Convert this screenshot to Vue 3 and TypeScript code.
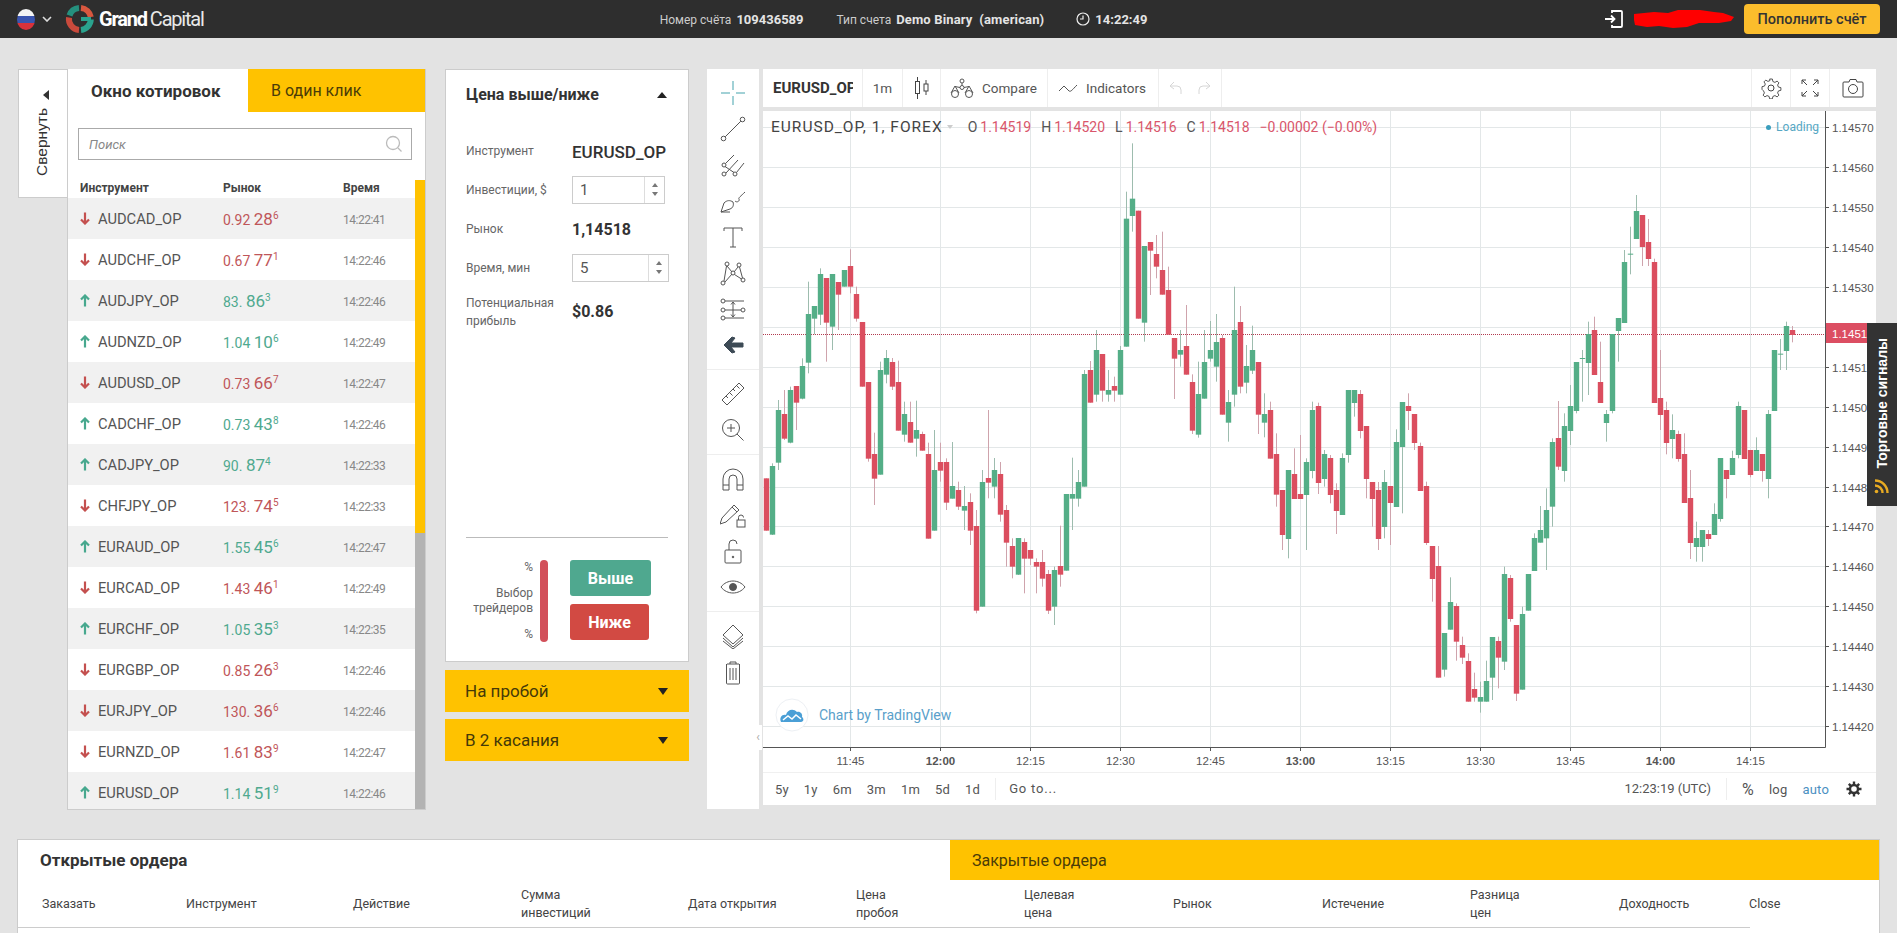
<template>
  <div class="page">
    <header class="topbar">
      <div class="flag"><span></span></div>
      <svg class="chevron" width="10" height="6" viewBox="0 0 10 6"><path d="M1 1l4 4 4-4" fill="none" stroke="#ddd" stroke-width="1.6" /></svg>
      <svg class="logo" width="32" height="32" viewBox="0 0 32 32" fill="none" stroke-width="6">
        <path d="M5.500 12.500A11 11 0 0 1 15 5" stroke="#25907e" />
        <path d="M17 5a11 11 0 0 1 9.800 9" stroke="#d8573f" />
        <path d="M26.800 16.500A11 11 0 0 1 17 27" stroke="#2aa38e" />
        <path d="M15 27A11 11 0 0 1 5 14.500" stroke="#c94a3c" />
        <path d="M17 16h10" stroke="#2aa38e" stroke-width="4" />
      </svg>
      <div class="brand"><b>Grand</b>Capital</div>
      <div class="account">
        <span class="acc-num">Номер счёта <b>109436589</b></span>
        <span class="acc-type">Тип счета <b>Demo Binary&nbsp; (american)</b></span>
        <span class="acc-time">
          <svg width="14" height="14" viewBox="0 0 14 14" fill="none" stroke="#eee" stroke-width="1.2"><circle cx="7" cy="7" r="6" /><path d="M7 3.500V7H4" /></svg>
          <b>14:22:49</b>
        </span>
      </div>
      <svg class="login" width="20" height="20" viewBox="0 0 20 20" fill="none" stroke="#fff" stroke-width="1.8"><path d="M8 4V2h9a1 1 0 0 1 1 1v14a1 1 0 0 1-1 1H8v-2" /><path d="M1 10h9M7 6.500l3.500 3.500L7 13.500" /></svg>
      <svg class="scribble" width="102" height="20" viewBox="0 0 102 20"><path d="M1 5l20-2 14 1 10-3 22 0 14 2 9 1 11 4-3 4-12 2-20 0-12 4-14 1-14-2-12 1-12-2-1-5z" fill="#f00" /></svg>
      <button class="topup" type="button">Пополнить счёт</button>
    </header>

    <main class="workspace">
      <aside class="collapse">
        <i class="tri-left"></i>
        <span>Свернуть</span>
      </aside>

      <section class="quotes">
        <div class="tabs">
          <div class="tab active">Окно котировок</div>
          <div class="tab">В один клик</div>
        </div>
        <div class="search">
          <input type="text" placeholder="Поиск" />
          <svg width="18" height="18" viewBox="0 0 18 18" fill="none" stroke="#bbb" stroke-width="1.3"><circle cx="8" cy="8" r="6.500" /><path d="M13 13l3.500 3.500" /></svg>
        </div>
        <div class="quote-head">
          <span>Инструмент</span><span>Рынок</span><span>Время</span>
        </div>
        <div class="quote-rows">
          <div v-for="q in quotes" :key="q.name" class="quote-row">
            <span class="q-name">
              <svg width="10" height="13" viewBox="0 0 10 13" fill="none" :stroke="q.up ? '#47a88e' : '#c4504f'" stroke-width="2.200">
                <path v-if="q.up" d="M5 12.500V2M1 5.500l4-4 4 4" />
                <path v-else d="M5 .500V11M1 7.500l4 4 4-4" />
              </svg>
              {{ q.name }}_OP
            </span>
            <span class="q-rate" :class="q.up ? 'up' : 'down'">{{ q.head }} <em>{{ q.big }}</em><sup>{{ q.tail }}</sup></span>
            <span class="q-time">{{ q.time }}</span>
          </div>
        </div>
        <div class="scroll"><div class="thumb"></div></div>
      </section>

      <section class="trade">
        <div class="trade-card">
          <div class="trade-title">Цена выше/ниже <i class="tri-up"></i></div>
          <div class="trade-form">
            <label>Инструмент</label>
            <strong class="symbol">EURUSD_OP</strong>
            <label>Инвестиции, $</label>
            <div class="spin short"><input type="text" value="1" /><div class="spin-btns"><i class="mini-up"></i><i class="mini-down"></i></div></div>
            <label>Рынок</label>
            <strong>1,14518</strong>
            <label>Время, мин</label>
            <div class="spin"><input type="text" value="5" /><div class="spin-btns"><i class="mini-up"></i><i class="mini-down"></i></div></div>
            <label class="two-line">Потенциальная прибыль</label>
            <strong class="profit">$0.86</strong>
          </div>
          <div class="traders">
            <div class="traders-text">
              <span>%</span>
              <span>Выбор<br />трейдеров</span>
              <span>%</span>
            </div>
            <div class="traders-bar"></div>
            <div class="trade-btns">
              <button class="btn-up" type="button">Выше</button>
              <button class="btn-down" type="button">Ниже</button>
            </div>
          </div>
        </div>
        <div class="accordion">На пробой <i class="tri-down"></i></div>
        <div class="accordion">В 2 касания <i class="tri-down"></i></div>
      </section>

      <nav class="tools">
        <div v-for="(group, g) in toolGroups" :key="g" class="tool-group">
          <div v-for="tool in group" :key="tool" class="tool">
            <svg width="26" height="26" viewBox="0 0 26 26" fill="none" :stroke="tool === 'cross' ? '#45a3ad' : '#555'" stroke-width="1">
              <g v-if="tool === 'cross'"><path d="M13 1v9M13 16v9M1 13h9M16 13h9" /></g>
              <g v-else-if="tool === 'line'"><circle cx="3.500" cy="22.500" r="2.300" /><circle cx="22.500" cy="3.500" r="2.300" /><path d="M5.200 20.800L20.800 5.200" /></g>
              <g v-else-if="tool === 'fork'"><circle cx="4" cy="13" r="2" /><circle cx="4" cy="22" r="2" /><circle cx="15" cy="22" r="2" /><path d="M5.500 11.500L14 3M6 21l12-13M16.500 20.500L24 11M5 14.500l9 6" /></g>
              <g v-else-if="tool === 'brush'"><path d="M1 24l3-9c3-3 6-3 9-1 1 3 0 6-3 7z M1 24h9" /><path d="M15 13c2 2 5 0 4-2-1-1 2-3 6-7" /></g>
              <g v-else-if="tool === 'text'"><path d="M4 4h18M4 4v3M22 4v3M13 4v19M10 23h6" /></g>
              <g v-else-if="tool === 'pattern'"><circle cx="7" cy="4" r="2" /><circle cx="19" cy="5" r="2" /><circle cx="13" cy="13" r="2" /><circle cx="3" cy="23" r="2" /><circle cx="23" cy="20" r="2" /><path d="M7 6l5 6M18 7l-4 5M6.500 6L4 21M19.500 7l3 11M5 22l7-8M14.500 14.500l7 4.500" /></g>
              <g v-else-if="tool === 'fib'"><circle cx="3" cy="5" r="2" /><circle cx="3" cy="14" r="2" /><circle cx="3" cy="22" r="2" /><circle cx="23" cy="14" r="2" /><path d="M5 5h19M5 14h16M5 22h19M13 6v15M11 8.500l2-2.500 2 2.500M11 18.500l2 2.500 2-2.500" /></g>
              <g v-else-if="tool === 'back'"><path d="M12 5l-8 8 8 8 3-1-4-5h12v-4H11l4-5z" fill="#3d4a55" stroke="#3d4a55" /></g>
              <g v-else-if="tool === 'ruler'"><path d="M2 19L19 2l5 5L7 24z M6 15l2 2M9.500 11.500l3 3M13 8l2 2M16.500 4.500l3 3" /></g>
              <g v-else-if="tool === 'zoom'"><circle cx="11" cy="11" r="8.500" /><path d="M17 17l6.500 6.500M7 11h8M11 7v8" /></g>
              <g v-else-if="tool === 'magnet'"><path d="M3 24V13a10 10 0 0 1 20 0v11h-6V13a4 4 0 0 0-8 0v11zM3 19h6M17 19h6" /></g>
              <g v-else-if="tool === 'pencil'"><path d="M2 16L14 3l5 5L6 20l-6 2z M12 5l5 5" /><rect x="17" y="18" width="8" height="7" /><path d="M18.500 18v-2.500a2.500 2.500 0 0 1 5 0" /></g>
              <g v-else-if="tool === 'lock'"><rect x="5" y="12" width="16" height="13" rx="1" /><path d="M9 12V6a4 4 0 0 1 8 0" /><circle cx="13" cy="19" r=".8" fill="#555" /></g>
              <g v-else-if="tool === 'eye'"><path d="M1 13c6-8 18-8 24 0-6 8-18 8-24 0z" /><circle cx="13" cy="13" r="3.500" fill="#555" /></g>
              <g v-else-if="tool === 'layers'"><path d="M13 2l10 10-10 9-10-9zM3 15l10 9 10-9M3 18l10 8 10-8" /></g>
              <g v-else-if="tool === 'trash'"><path d="M7 5h12M10 5V3h6v2M6.500 5v19a1 1 0 0 0 1 1h11a1 1 0 0 0 1-1V5M10 9v12M13 9v12M16 9v12" /></g>
            </svg>
          </div>
        </div>
      </nav>

      <section class="chart">
        <div class="chart-top">
          <div class="cell symbol-cell"><span>EURUSD_OP</span></div>
          <div class="cell">1m</div>
          <div class="cell">
            <svg width="16" height="24" viewBox="0 0 16 24" fill="none" stroke="#444" stroke-width="1"><rect x="1.500" y="5.500" width="4" height="12" /><path d="M3.500 1v4M3.500 18v5M12 4v4M12 15v4" /><rect x="10" y="8" width="4" height="7" /></svg>
          </div>
          <div class="cell">
            <svg width="24" height="22" viewBox="0 0 24 22" fill="none" stroke="#555" stroke-width="1"><circle cx="12" cy="4" r="2" /><circle cx="12" cy="10.500" r="2" /><path d="M12 6v2.500M1 16l4-7 4 7M15 16l4-7 4 7" /><path d="M10 10.500l-5-1M14 10.500l5-1" /><circle cx="5" cy="17" r="3.500" /><circle cx="19" cy="17" r="3.500" /></svg>
            Compare
          </div>
          <div class="cell">
            <svg width="20" height="12" viewBox="0 0 20 12" fill="none" stroke="#555" stroke-width="1"><path d="M1 9l5-5 5 5c2 1 3-1 8-6" /></svg>
            Indicators
          </div>
          <div class="cell undo">
            <svg width="14" height="14" viewBox="0 0 14 14" fill="none" stroke="#d6d6d6" stroke-width="1"><path d="M5 1L1 5l4 3M1 5h7a4 4 0 0 1 4 4v4" /></svg>
            <svg width="14" height="14" viewBox="0 0 14 14" fill="none" stroke="#d6d6d6" stroke-width="1"><path d="M9 1l4 4-4 3M13 5H6a4 4 0 0 0-4 4v4" /></svg>
          </div>
          <div class="top-spacer"></div>
          <div class="cell icon-cell">
            <svg width="22" height="22" viewBox="0 0 22 22" fill="none" stroke="#444" stroke-width="1"><circle cx="11" cy="11" r="3" /><path d="M9.500 1h3l.6 2.800 2.300 1 2.400-1.500 2 2-1.500 2.400 1 2.300 2.700.6v3l-2.700.6-1 2.300 1.500 2.400-2 2-2.400-1.500-2.300 1-.6 2.700h-3l-.6-2.700-2.300-1-2.400 1.500-2-2 1.500-2.400-1-2.300L1 12.500v-3l2.700-.6 1-2.300-1.500-2.400 2-2 2.400 1.500 2.300-1z" transform="translate(1.100 1.100) scale(.9)" /></svg>
          </div>
          <div class="cell icon-cell">
            <svg width="18" height="18" viewBox="0 0 18 18" fill="none" stroke="#444" stroke-width="1"><path d="M1 5V1h4M13 1h4v4M1 13v4h4M13 17h4v-4M1 1l5 5M17 1l-5 5M1 17l5-5M17 17l-5-5" /></svg>
          </div>
          <div class="cell icon-cell last">
            <svg width="22" height="20" viewBox="0 0 22 20" fill="none" stroke="#444" stroke-width="1"><path d="M2 4h5l1-2.500h6L15 4h5a1 1 0 0 1 1 1v13a1 1 0 0 1-1 1H2a1 1 0 0 1-1-1V5a1 1 0 0 1 1-1z" /><circle cx="11" cy="11" r="4.500" /></svg>
          </div>
        </div>

        <div class="pane">
          <svg class="plot" width="1113" height="661" viewBox="0 0 1113 661">
            <g stroke="#e3e7e8" stroke-width="1">
              <line v-for="t in timeTicks" :key="t.label" :x1="t.x" :x2="t.x" y1="0" y2="636" />
              <line v-for="p in priceTicks" :key="p.label" x1="0" x2="1063" :y1="p.y" :y2="p.y" />
            </g>
            <line x1="0" x2="1063" y1="223.500" y2="223.500" stroke="#b23a4e" stroke-dasharray="1 1" />
            <g v-for="c in candles" :key="c.x">
              <line :x1="c.x" :x2="c.x" :y1="c.high" :y2="c.low" :stroke="c.up ? '#9dbcae' : '#cfa3ac'" />
              <rect :x="c.x - 2.700" :y="c.top" width="5.400" :height="c.height" :fill="c.up ? '#54ae87' : '#db4e5f'" />
            </g>
            <path d="M0 636.500H1062.500V0" fill="none" stroke="#555" />
            <g stroke="#555">
              <line v-for="t in timeTicks" :key="t.label" :x1="t.x" :x2="t.x" y1="636" y2="640" />
              <line v-for="p in priceTicks" :key="p.label" x1="1063" x2="1066" :y1="p.y" :y2="p.y" />
            </g>
            <text v-for="t in timeTicks" :key="t.label" :x="t.x" y="654" class="axis-text" :class="{ bold: t.bold }" text-anchor="middle">{{ t.label }}</text>
            <text v-for="p in priceTicks" :key="p.label" x="1069" :y="p.y + 4" class="axis-text">{{ p.label }}</text>
            <rect x="1063" y="212" width="50" height="20" fill="#dc4e62" />
            <text x="1069" y="226.500" class="axis-text last-price">1.14518</text>
          </svg>

          <div class="legend">
            <span class="legend-name">EURUSD_OP, 1, FOREX</span>
            <i class="legend-caret"></i>
            <span class="ohlc"><u>O</u>1.14519</span>
            <span class="ohlc"><u>H</u>1.14520</span>
            <span class="ohlc"><u>L</u>1.14516</span>
            <span class="ohlc"><u>C</u>1.14518</span>
            <span class="ohlc">−0.00002 (−0.00%)</span>
          </div>
          <div class="loading"><i></i>Loading</div>
          <div class="watermark">
            <svg width="34" height="34" viewBox="0 0 34 34">
              <circle cx="17" cy="17" r="16" fill="#fff" stroke="#edf0f4" />
              <path d="M6 24c-2-4 1-8 5-7 1-5 7-7 11-3 3-1 6 2 5 5 2 1 2 5-1 5z" fill="#4a9fd6" />
              <path d="M8 22l5-4 4 3 4-4 5 4" fill="none" stroke="#fff" stroke-width="1.500" />
            </svg>
            <span>Chart by TradingView</span>
          </div>
          <div class="side-handle">‹</div>
        </div>

        <div class="chart-bottom">
          <span v-for="r in ranges" :key="r">{{ r }}</span>
          <span class="goto">Go to...</span>
          <div class="top-spacer"></div>
          <span class="utc">12:23:19 (UTC)</span>
          <span class="pct">%</span>
          <span>log</span>
          <span class="auto">auto</span>
          <svg width="16" height="16" viewBox="0 0 16 16" fill="none" stroke="#333" stroke-width="2.400"><circle cx="8" cy="8" r="4" /><path d="M8 .5v3M8 12.500v3M.5 8h3M12.500 8h3M2.800 2.800l2 2M11.200 11.200l2 2M13.200 2.800l-2 2M4.800 11.200l-2 2" /></svg>
        </div>
      </section>

      <aside class="signals">
        <span>Торговые сигналы</span>
        <svg width="18" height="18" viewBox="0 0 18 18" fill="none" stroke="#e8ab22" stroke-width="2.400"><circle cx="3.500" cy="14.500" r="1.800" fill="#e8ab22" stroke="none" /><path d="M2 8.500a7.500 7.500 0 0 1 7.500 7.500M2 3.500a12.500 12.500 0 0 1 12.500 12.500" /></svg>
      </aside>
    </main>

    <section class="orders">
      <div class="order-tabs">
        <div class="order-tab active">Открытые ордера</div>
        <div class="order-tab">Закрытые ордера</div>
      </div>
      <div class="order-head">
        <span v-for="col in orderColumns" :key="col" v-html="col"></span>
      </div>
    </section>
  </div>
</template>

<script setup lang="ts">
interface Quote {
  name: string
  head: string
  big: string
  tail: string
  up: boolean
  time: string
}

const quote = (name: string, head: string, big: string, tail: string, up: boolean, time: string): Quote => ({
  name,
  head,
  big,
  tail,
  up,
  time: '14:22:' + time,
})

const quotes: Quote[] = [
  quote('AUDCAD', '0.92', '28', '6', false, '41'),
  quote('AUDCHF', '0.67', '77', '1', false, '46'),
  quote('AUDJPY', '83.', '86', '3', true, '46'),
  quote('AUDNZD', '1.04', '10', '6', true, '49'),
  quote('AUDUSD', '0.73', '66', '7', false, '47'),
  quote('CADCHF', '0.73', '43', '8', true, '46'),
  quote('CADJPY', '90.', '87', '4', true, '33'),
  quote('CHFJPY', '123.', '74', '5', false, '33'),
  quote('EURAUD', '1.55', '45', '6', true, '47'),
  quote('EURCAD', '1.43', '46', '1', false, '49'),
  quote('EURCHF', '1.05', '35', '3', true, '35'),
  quote('EURGBP', '0.85', '26', '3', false, '46'),
  quote('EURJPY', '130.', '36', '6', false, '46'),
  quote('EURNZD', '1.61', '83', '9', false, '47'),
  quote('EURUSD', '1.14', '51', '9', true, '46'),
]

const toolGroups = [
  ['cross', 'line', 'fork', 'brush', 'text', 'pattern', 'fib', 'back'],
  ['ruler', 'zoom'],
  ['magnet', 'pencil', 'lock', 'eye'],
  ['layers', 'trash'],
]

const ranges = ['5y', '1y', '6m', '3m', '1m', '5d', '1d']

const orderColumns = [
  'Заказать',
  'Инструмент',
  'Действие',
  'Сумма<br>инвестиций',
  'Дата открытия',
  'Цена<br>пробоя',
  'Целевая<br>цена',
  'Рынок',
  'Истечение',
  'Разница<br>цен',
  'Доходность',
  'Close',
]

// chart pane starts at 763,111 on the page
const PANE_X = 763
const PANE_Y = 111
const BAR_STEP = 6
const firstTick = 850.5 - PANE_X

const timeLabels = ['11:45', '12:00', '12:15', '12:30', '12:45', '13:00', '13:15', '13:30', '13:45', '14:00', '14:15']
const timeTicks = timeLabels.map((label, i) => ({
  label,
  x: firstTick + i * 15 * BAR_STEP,
  bold: label.endsWith(':00'),
}))

const priceTicks = Array.from({ length: 16 }, (_, i) => ({
  label: (1.1457 - i * 0.0001).toFixed(5),
  y: Math.round(127.4 + i * 39.9 - PANE_Y) + 0.5,
}))

// bars: [up, wick top, body top, body bottom, wick bottom], y in thirds of a px from `dy`
type Bar = [number, number, number, number, number]

const barBlocks: { dy: number; first: number; bars: Bar[] }[] = [
  {
    dy: 135,
    first: -14,
    bars: [
      [0, 1030, 1030, 1187, 1187], [1, 985, 993, 1199, 1200], [1, 795, 825, 983, 1005], [0, 765, 837, 911, 915],
      [1, 755, 765, 923, 925], [0, 753, 753, 803, 885], [1, 670, 693, 791, 793], [1, 440, 537, 683, 715],
      [1, 513, 513, 551, 598], [1, 400, 417, 539, 570], [0, 429, 429, 563, 680], [1, 417, 417, 575, 645],
      [0, 441, 441, 479, 585], [1, 405, 405, 455, 455], [0, 343, 393, 455, 475], [0, 455, 477, 551, 560],
      [0, 561, 561, 755, 755], [0, 741, 741, 971, 980], [0, 893, 957, 1031, 1110], [1, 680, 705, 1019, 1019],
      [1, 645, 669, 719, 745], [0, 669, 681, 755, 765], [0, 677, 741, 887, 887], [1, 800, 837, 899, 920],
      [0, 800, 861, 923, 923], [1, 797, 885, 911, 965], [0, 890, 897, 947, 947], [0, 923, 957, 1211, 1211],
      [1, 885, 1005, 1187, 1187], [0, 923, 981, 1007, 1040], [0, 970, 981, 1103, 1125], [1, 921, 1053, 1091, 1091],
      [0, 1040, 1065, 1115, 1125], [1, 1053, 1113, 1127, 1185], [0, 1075, 1101, 1187, 1230], [0, 1125, 1173, 1427, 1435],
      [1, 1005, 1041, 1415, 1415], [0, 825, 1029, 1043, 1090], [1, 969, 1005, 1055, 1090], [0, 981, 1017, 1139, 1160],
      [0, 1110, 1125, 1223, 1295], [0, 1210, 1233, 1295, 1330], [1, 1209, 1209, 1319, 1320], [0, 1210, 1221, 1271, 1375],
      [0, 1245, 1245, 1271, 1290], [0, 1270, 1281, 1295, 1375], [0, 1245, 1281, 1331, 1355], [0, 1305, 1317, 1427, 1437],
      [1, 1295, 1305, 1415, 1470], [0, 1172, 1293, 1319, 1355], [1, 1077, 1077, 1307, 1307], [1, 968, 1077, 1091, 1185],
      [1, 1005, 1041, 1091, 1115], [1, 705, 717, 1055, 1055], [0, 678, 705, 803, 803], [1, 585, 645, 779, 800],
      [0, 657, 657, 767, 800], [1, 705, 765, 779, 800], [0, 725, 753, 767, 800], [1, 633, 645, 779, 779],
      [1, 170, 251, 635, 635], [1, 25, 191, 243, 290], [0, 227, 227, 551, 551], [1, 333, 333, 563, 620],
      [0, 321, 321, 347, 480], [0, 300, 357, 395, 430], [0, 290, 405, 479, 479], [0, 395, 465, 599, 599],
      [0, 609, 609, 671, 792], [1, 585, 645, 659, 695], [0, 510, 633, 719, 719], [0, 718, 741, 887, 897],
      [1, 680, 777, 899, 908], [1, 585, 681, 791, 791], [1, 558, 645, 671, 680], [1, 537, 621, 695, 740],
      [0, 600, 609, 839, 839], [1, 765, 801, 863, 920], [1, 455, 585, 779, 815], [0, 513, 561, 755, 775],
      [1, 630, 693, 743, 775], [1, 572, 645, 707, 717], [0, 681, 681, 839, 897], [1, 775, 837, 863, 907],
      [0, 800, 825, 971, 971], [0, 895, 957, 1079, 1115],
    ],
  },
  {
    dy: 220,
    first: 72,
    bars: [
      [0, 810, 810, 945, 990], [1, 750, 750, 957, 1015], [0, 685, 762, 837, 837], [0, 645, 822, 837, 837],
      [1, 715, 726, 825, 990], [1, 545, 570, 753, 775], [0, 548, 558, 789, 822], [1, 690, 702, 777, 800],
      [0, 705, 714, 825, 850], [0, 790, 810, 873, 942], [1, 700, 714, 885, 885], [1, 510, 510, 705, 728],
      [1, 510, 510, 549, 590], [0, 510, 522, 633, 655], [0, 618, 618, 777, 835], [0, 786, 786, 837, 920],
      [0, 786, 810, 957, 990], [1, 750, 786, 921, 955], [0, 798, 798, 849, 975], [1, 628, 666, 861, 861],
      [1, 546, 546, 681, 880], [0, 520, 558, 573, 630], [0, 582, 582, 669, 690], [0, 668, 678, 813, 813],
      [0, 785, 798, 969, 975], [0, 978, 978, 1077, 1145], [0, 978, 1038, 1373, 1373], [1, 1239, 1239, 1349, 1370],
      [1, 1072, 1146, 1229, 1229], [0, 1150, 1158, 1265, 1322], [0, 1250, 1275, 1313, 1332], [0, 1300, 1323, 1445, 1445],
      [0, 1358, 1407, 1433, 1445], [1, 1385, 1431, 1445, 1478], [1, 1322, 1383, 1445, 1445], [1, 1251, 1251, 1373, 1440],
      [0, 1250, 1263, 1313, 1405], [1, 1040, 1062, 1325, 1350], [0, 1065, 1074, 1197, 1205], [0, 1215, 1215, 1421, 1443],
      [1, 1160, 1182, 1409, 1409], [1, 1062, 1062, 1172, 1172], [1, 940, 954, 1053, 1053],
    ],
  },
  {
    dy: 180,
    first: 115,
    bars: [
      [1, 978, 1050, 1088, 1088], [1, 925, 990, 1075, 1170], [1, 775, 786, 980, 1040], [0, 663, 774, 860, 870],
      [1, 700, 738, 873, 905], [1, 615, 678, 753, 795], [1, 546, 546, 693, 700], [1, 510, 534, 537, 665],
      [1, 425, 462, 549, 645], [0, 410, 450, 585, 585], [0, 485, 606, 669, 669], [1, 690, 702, 729, 785],
      [1, 462, 462, 693, 700], [1, 414, 414, 453, 545], [1, 210, 246, 429, 429], [1, 140, 221, 224, 283],
      [1, 45, 93, 177, 177], [0, 105, 105, 201, 258], [0, 117, 186, 237, 258], [0, 236, 246, 669, 669],
      [0, 510, 654, 705, 750], [0, 665, 690, 789, 823], [1, 703, 750, 777, 835], [0, 752, 762, 837, 845],
      [0, 760, 822, 969, 969], [0, 870, 954, 1089, 1137], [1, 1025, 1074, 1101, 1145], [1, 1050, 1050, 1101, 1145],
      [0, 1050, 1062, 1077, 1098], [1, 970, 1002, 1065, 1065], [1, 834, 834, 1017, 1025], [0, 870, 870, 897, 955],
      [1, 812, 834, 885, 885], [1, 665, 678, 825, 835], [0, 690, 690, 837, 837], [0, 810, 810, 885, 892],
      [1, 772, 810, 873, 873], [0, 822, 822, 873, 905], [1, 690, 702, 897, 955], [1, 510, 510, 693, 693],
      [1, 477, 521, 524, 570], [1, 425, 438, 513, 570], [0, 438, 450, 465, 487],
    ],
  },
]

const candles = barBlocks.flatMap(({ dy, first, bars }) =>
  bars.map(([up, high, top, bottom, low], i) => {
    const toY = (z: number) => dy + z / 3 - PANE_Y
    return {
      x: Math.round(firstTick - 1 + (first + i) * BAR_STEP) + 0.5,
      up: up === 1,
      high: toY(high),
      low: toY(low),
      top: toY(top),
      height: (bottom - top) / 3,
    }
  }),
)
</script>

<style scoped>
.page {
  position: relative;
  width: 1897px;
  height: 933px;
  overflow: hidden;
  background: #e3e3e3;
  font-family: Roboto, "Noto Sans", sans-serif;
  color: #333;
}

/* header */
.topbar {
  display: flex;
  align-items: center;
  height: 38px;
  padding: 0 17px;
  background: #2e2e2e;
  color: #ccc;
  font-size: 12px;
}

.flag {
  width: 18px;
  height: 21px;
  border-radius: 50%;
  overflow: hidden;
  background: linear-gradient(#f4f4f4 0 33%, #3a55b0 33% 66%, #d8323c 66%);
}

.chevron {
  margin-left: 7px;
}

.logo {
  margin-left: 12px;
}

.brand {
  margin-left: 3px;
  color: #e8e8e8;
  font-size: 20px;
  letter-spacing: -1.200px;
  white-space: nowrap;
}

.brand b {
  margin-right: 3px;
  color: #fff;
}

.account {
  display: flex;
  align-items: center;
  margin-left: 456px;
  white-space: nowrap;
}

.account b {
  margin-left: 2px;
  color: #e4e4e4;
  font-size: 13px;
  font-weight: 700;
}

.acc-type {
  margin-left: 33px;
}

.acc-type b {
  letter-spacing: .15px;
}

.acc-time {
  display: flex;
  align-items: center;
  gap: 3px;
  margin-left: 32px;
}

.login {
  margin-left: auto;
}

.scribble {
  margin-left: 9px;
}

.topup {
  width: 136px;
  height: 30px;
  margin-left: 9px;
  border: 0;
  border-radius: 4px;
  background: #fbbd2c;
  color: #333;
  font: 500 14.500px Roboto, sans-serif;
}

/* main row */
.workspace {
  position: relative;
  display: flex;
  align-items: flex-start;
  padding: 31px 0 0 18px;
}

.collapse {
  position: relative;
  width: 49px;
  height: 129px;
  box-sizing: border-box;
  background: #fff;
  border: 1px solid #ccc;
  border-right: 0;
}

.tri-left {
  position: absolute;
  top: 20px;
  left: 24px;
  border: 5px solid transparent;
  border-left-width: 0;
  border-right: 6px solid #333;
}

.collapse span {
  position: absolute;
  top: 38px;
  left: 14px;
  writing-mode: vertical-rl;
  transform: rotate(180deg);
  font: 15.500px "Liberation Sans", sans-serif;
}

.quotes {
  position: relative;
  width: 359px;
  height: 741px;
  box-sizing: border-box;
  display: flex;
  flex-direction: column;
  overflow: hidden;
  background: #fff;
  border: 1px solid #ccc;
  border-top: 0;
}

.tabs {
  display: flex;
  height: 43px;
  flex: none;
  font-size: 16px;
}

.tab {
  display: flex;
  align-items: center;
  flex: 1;
  padding-left: 23px;
  box-sizing: border-box;
  background: #ffc200;
  color: #4a3c08;
}

.tab.active {
  flex: none;
  width: 180px;
  background: #fff;
  color: #333;
  font-size: 17px;
  font-weight: 700;
}

.search {
  position: relative;
  flex: none;
  margin: 16px 13px 0 10px;
  height: 32px;
}

.search input {
  width: 100%;
  height: 100%;
  box-sizing: border-box;
  padding-left: 10px;
  border: 1px solid #aaa;
  outline: 0;
  font: italic 13px Roboto, sans-serif;
}

.search input::placeholder {
  color: #888;
}

.search svg {
  position: absolute;
  top: 7px;
  right: 9px;
}

.quote-head {
  display: grid;
  grid-template-columns: 143px 120px 1fr;
  flex: none;
  height: 38px;
  align-items: flex-end;
  padding: 0 0 3px 12px;
  box-sizing: border-box;
  font-size: 12px;
  font-weight: 700;
  color: #444;
}

.quote-row {
  display: grid;
  grid-template-columns: 143px 120px 1fr;
  align-items: center;
  height: 41px;
  margin-right: 10px;
  padding-left: 12px;
  box-sizing: border-box;
}

.quote-row:nth-child(odd) {
  background: #f1f1f1;
}

.q-name {
  display: flex;
  align-items: center;
  gap: 8px;
  font-size: 14.700px;
  color: #555;
}

.q-rate {
  font-size: 14px;
  white-space: nowrap;
}

.q-rate em {
  font-style: normal;
  font-size: 17px;
}

.q-rate sup {
  font-size: 10px;
  line-height: 0;
}

.q-rate.up {
  color: #4fa98f;
}

.q-rate.down {
  color: #bf5659;
}

.q-time {
  padding-top: 3px;
  font-size: 12px;
  letter-spacing: -.5px;
  color: #888;
}

.scroll {
  position: absolute;
  top: 111px;
  right: 0;
  bottom: 0;
  width: 10px;
  background: #b3b3b3;
}

.thumb {
  height: 353px;
  background: #ffc200;
}

/* trade card */
.trade {
  width: 244px;
  margin-left: 19px;
}

.trade-card {
  height: 593px;
  box-sizing: border-box;
  display: flex;
  flex-direction: column;
  padding: 0 20px;
  background: #fff;
  border: 1px solid #ccc;
}

.trade-title {
  display: flex;
  align-items: center;
  justify-content: space-between;
  flex: none;
  height: 61px;
  box-sizing: border-box;
  padding: 0 1px 12px 0;
  font-size: 16px;
  font-weight: 700;
}

.tri-up {
  border: 5px solid transparent;
  border-top: 0;
  border-bottom: 6px solid #222;
}

.tri-down {
  border: 5px solid transparent;
  border-bottom: 0;
  border-top: 7px solid #222;
}

.trade-form {
  display: grid;
  grid-template-columns: 106px 1fr;
  grid-auto-rows: 39px;
  align-items: center;
  flex: 1;
}

.trade-form label {
  font-size: 12px;
  color: #666;
}

.trade-form label.two-line {
  line-height: 18px;
  height: 36px;
  width: 96px;
  margin-top: 10px;
}

.trade-form strong {
  font-size: 16px;
  font-weight: 700;
  color: #333;
  padding-top: 2px;
}

.trade-form strong.symbol {
  font-size: 17px;
  font-weight: 500;
}

.trade-form strong.profit {
  padding-top: 10px;
}

.spin {
  display: flex;
  width: 97px;
  height: 28px;
  box-sizing: border-box;
  border: 1px solid #ccc;
}

.spin.short {
  width: 93px;
}

.spin input {
  width: 0;
  flex: 1;
  padding: 0 0 0 7px;
  border: 0;
  outline: 0;
  font: 15px Roboto, sans-serif;
  color: #555;
}

.spin-btns {
  display: flex;
  flex-direction: column;
  justify-content: space-around;
  align-items: center;
  width: 20px;
  padding: 4px 0;
  box-sizing: border-box;
  border-left: 1px solid #ddd;
}

.mini-up {
  border: 3px solid transparent;
  border-top: 0;
  border-bottom: 4px solid #777;
}

.mini-down {
  border: 3px solid transparent;
  border-bottom: 0;
  border-top: 4px solid #777;
}

.traders {
  display: flex;
  flex: none;
  height: 124px;
  box-sizing: border-box;
  padding-top: 22px;
  border-top: 1px solid #bbb;
}

.traders-text {
  display: flex;
  flex-direction: column;
  justify-content: space-between;
  width: 67px;
  height: 82px;
  text-align: right;
  font-size: 12px;
  line-height: 15px;
  color: #666;
}

.traders-bar {
  width: 8px;
  height: 82px;
  margin-left: 7px;
  border-radius: 4px;
  background: #d2505a;
}

.trade-btns {
  display: flex;
  flex-direction: column;
  align-items: flex-start;
  gap: 8px;
  margin-left: 22px;
}

.trade-btns button {
  width: 81px;
  height: 36px;
  border: 0;
  border-radius: 3px;
  color: #fff;
  font: 700 16px Roboto, sans-serif;
}

.trade-btns .btn-down {
  width: 79px;
}

.btn-up {
  background: #4fa88f;
}

.btn-down {
  background: #d24a43;
}

.accordion {
  display: flex;
  align-items: center;
  justify-content: space-between;
  height: 42px;
  margin-top: 8px;
  padding: 0 21px 0 20px;
  background: #ffc200;
  color: #453908;
  font-size: 17px;
}

.accordion + .accordion {
  margin-top: 7px;
}

/* drawing tools */
.tools {
  width: 52px;
  height: 740px;
  margin-left: 18px;
  flex: none;
  background: #fff;
}

.tool-group {
  padding: 6px 0;
  border-bottom: 1px solid #eee;
}

.tool-group:last-child {
  border: 0;
}

.tool {
  display: flex;
  align-items: center;
  justify-content: center;
  height: 36px;
}

/* chart */
.chart {
  width: 1113px;
  margin-left: 4px;
  flex: none;
}

.chart-top {
  display: flex;
  align-items: center;
  height: 38px;
  background: #fff;
  font-size: 13.500px;
  color: #555;
}

.cell {
  display: flex;
  align-items: center;
  gap: 8px;
  height: 100%;
  box-sizing: border-box;
  padding: 0 10px;
  border-right: 1px solid #eee;
  white-space: nowrap;
}

.symbol-cell {
  width: 100px;
  overflow: hidden;
  padding-right: 9px;
  font-size: 15px;
  font-weight: 700;
  color: #333;
}

.symbol-cell span {
  display: block;
  width: 80px;
  overflow: hidden;
}

.cell:nth-child(2) {
  width: 40px;
  justify-content: center;
  padding: 0;
}

.cell:nth-child(3) {
  width: 38px;
  justify-content: center;
  padding: 0;
}

.cell:nth-child(4) {
  width: 107px;
  padding-left: 9px;
}

.cell:nth-child(5) {
  width: 111px;
}

.undo {
  width: 63px;
  gap: 14px;
}

.top-spacer {
  flex: 1;
}

.icon-cell {
  width: 39px;
  justify-content: center;
  padding: 0;
  border-right: 0;
  border-left: 1px solid #eee;
}

.icon-cell.last {
  width: 47px;
}

.pane {
  position: relative;
  height: 661px;
  margin-top: 4px;
  background: #fff;
}

.plot {
  display: block;
}

.axis-text {
  font: 11.500px "Liberation Sans", sans-serif;
  fill: #555;
}

.axis-text.bold {
  font-weight: 700;
}

.axis-text.last-price {
  fill: #fff;
}

.legend {
  position: absolute;
  top: 6px;
  left: 8px;
  display: flex;
  align-items: center;
  font-size: 14px;
  line-height: 20px;
  white-space: nowrap;
  color: #d9566b;
}

.legend-name {
  color: #444;
  font-size: 15.500px;
  letter-spacing: 1px;
}

.legend-caret {
  margin: 0 15px 0 4px;
  border: 3px solid transparent;
  border-bottom: 0;
  border-top: 4px solid #ccc;
}

.ohlc {
  margin-right: 10px;
}

.ohlc u {
  margin-right: 3px;
  text-decoration: none;
  color: #555;
}

.loading {
  position: absolute;
  top: 9px;
  right: 57px;
  display: flex;
  align-items: center;
  gap: 5px;
  font-size: 12px;
  color: #55a7c4;
}

.loading i {
  width: 5px;
  height: 5px;
  border-radius: 50%;
  background: #3a9ebd;
}

.watermark {
  position: absolute;
  top: 587px;
  left: 12px;
  display: flex;
  align-items: center;
  gap: 10px;
  font-size: 14px;
  color: #5a9fca;
}

.side-handle {
  position: absolute;
  top: 614px;
  left: -9px;
  width: 8px;
  height: 25px;
  background: #fff;
  border-radius: 2px 0 0 2px;
  color: #aaa;
  font-size: 12px;
  line-height: 25px;
  text-align: center;
}

.chart-bottom {
  display: flex;
  align-items: center;
  gap: 15px;
  height: 33px;
  padding: 0 14px 0 12px;
  border-top: 1px solid #f0f0f0;
  box-sizing: border-box;
  background: #fff;
  font-size: 13px;
  letter-spacing: .2px;
  color: #555;
}

.goto {
  padding-left: 13px;
  border-left: 1px solid #eee;
  line-height: 22px;
  letter-spacing: .8px;
}

.utc {
  padding-right: 15px;
  border-right: 1px solid #eee;
  line-height: 22px;
  letter-spacing: 0;
}

.pct {
  font-size: 16px;
}

.auto {
  color: #4a90c2;
  margin-right: 2px;
}

.signals {
  position: absolute;
  top: 285px;
  right: 0;
  display: flex;
  flex-direction: column;
  align-items: center;
  gap: 8px;
  width: 30px;
  height: 183px;
  padding-top: 15px;
  box-sizing: border-box;
  background: #333;
}

.signals span {
  writing-mode: vertical-rl;
  transform: rotate(180deg);
  color: #fff;
  font: 700 14px "Liberation Sans", sans-serif;
  white-space: nowrap;
}

/* orders */
.orders {
  width: 1863px;
  height: 120px;
  margin: 29px 0 0 17px;
  box-sizing: border-box;
  background: #fff;
  border: 1px solid #ccc;
}

.order-tabs {
  display: flex;
  height: 40px;
  font-size: 16px;
}

.order-tab {
  display: flex;
  align-items: center;
  flex: 1;
  padding-left: 22px;
  background: #ffc200;
  color: #4a3c08;
}

.order-tab.active {
  flex: none;
  width: 932px;
  box-sizing: border-box;
  background: #fff;
  color: #333;
  font-size: 17px;
  font-weight: 700;
}

.order-head {
  display: grid;
  grid-template-columns: 144px 167px 168px 167px 168px 168px 149px 149px 148px 149px 130px 0;
  align-items: center;
  width: 1732px;
  height: 48px;
  padding-left: 24px;
  box-sizing: border-box;
  border-bottom: 1px solid #ccc;
  font-size: 12.500px;
  line-height: 18px;
  color: #444;
  white-space: nowrap;
}
</style>

<style>
html,
body {
  margin: 0;
  overflow: hidden;
}
</style>
